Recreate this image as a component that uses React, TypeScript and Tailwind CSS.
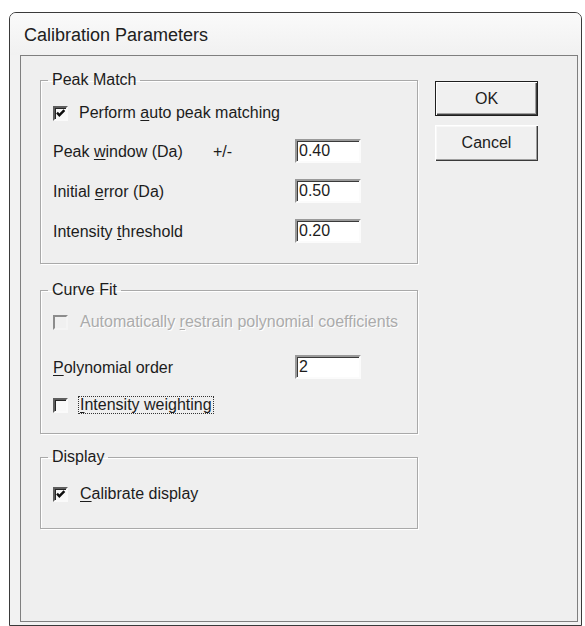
import type { ReactNode } from 'react';

const ui = "font-['Liberation_Sans',Arial,sans-serif]";

function Check({ checked = false, disabled = false }: { checked?: boolean; disabled?: boolean }) {
  return (
    <span
      className={`relative w-[15px] h-[15px] flex-shrink-0 border-2 ${
        disabled
          ? 'border-t-[#8c8c8c] border-l-[#8c8c8c] border-b-[#f4f4f4] border-r-[#f4f4f4] bg-[#f0f0f0]'
          : 'border-t-[#5e5e5e] border-l-[#5e5e5e] border-b-[#fafafa] border-r-[#fafafa] bg-[#f8f8f8] shadow-[inset_1px_1px_0_#262626]'
      }`}
    >
      {checked && (
        <svg viewBox="0 0 11 11" className="absolute left-0 top-0 w-[11px] h-[11px]">
          <path d="M2 4.6 L4.4 7.2 L9.4 2.2" fill="none" stroke="#0e0e0e" strokeWidth="2.4" />
        </svg>
      )}
    </span>
  );
}

function Field({ value }: { value: string }) {
  return (
    <div className="w-[66px] h-[24px] border-2 border-t-[#9a9a9a] border-l-[#9a9a9a] border-b-[#fbfbfb] border-r-[#fbfbfb] bg-white shadow-[inset_1px_1px_0_#3a3a3a] pl-[2px] leading-[20px] text-[16px] text-[#1c1c1c]">
      {value}
    </div>
  );
}

function Group({ title, height, children }: { title: string; height: string; children: ReactNode }) {
  return (
    <fieldset className={`${height} border border-[#a9a9a9] shadow-[inset_1px_1px_0_#ffffff,1px_1px_0_#ffffff]`}>
      <legend className="ml-[7px] px-[4px] text-[16px] leading-[18px] text-[#1c1c1c]">{title}</legend>
      {children}
    </fieldset>
  );
}

function Row({ label, value, extra }: { label: ReactNode; value: string; extra?: string }) {
  return (
    <div className="flex items-center h-[24px] pl-[12px]">
      <span className="w-[160px] pt-[2px]">{label}</span>
      <span className="w-[82px] pt-[2px]">{extra}</span>
      <Field value={value} />
    </div>
  );
}

const Key = ({ children }: { children: string }) => (
  <u className="underline decoration-1 underline-offset-[2px]">{children}</u>
);

export default function App() {
  return (
    <div className={`${ui} w-[585px] h-[626px] bg-white pt-[12px] pl-[9px] text-[16px] text-[#1c1c1c]`}>
      {/* window frame */}
      <div className="w-[573px] h-[614px] border border-[#3a3a3a] rounded-t-[7px] bg-[#f2f2f2] flex flex-col overflow-hidden">
        <div className="h-[42px] flex-shrink-0 flex items-center pl-[14px] pt-[2px] text-[18px] text-[#202020] bg-gradient-to-b from-[#fafafa] to-[#f1f1f1]">
          Calibration Parameters
        </div>

        <div className="flex-1 flex pl-[10px] pr-[3px] pb-[3px]">
          {/* client area */}
          <div className="flex-1 flex gap-[17px] border border-[#7f7f7f] bg-[#efefef] pl-[19px] pt-[15px]">
            <div className="w-[378px] flex flex-col">
              <Group title="Peak Match" height="h-[193px]">
                <div className="flex items-center gap-[11px] h-[20px] pl-[12px] mt-[14px]">
                  <Check checked />
                  <span>Perform <Key>a</Key>uto peak matching</span>
                </div>
                <div className="flex flex-col gap-[16px] mt-[16px]">
                  <Row label={<>Peak <Key>w</Key>indow (Da)</>} extra="+/-" value="0.40" />
                  <Row label={<>Initial <Key>e</Key>rror (Da)</>} value="0.50" />
                  <Row label={<>Intensity <Key>t</Key>hreshold</>} value="0.20" />
                </div>
              </Group>

              <div className="mt-[17px]">
                <Group title="Curve Fit" height="h-[153px]">
                  <div className="flex items-center gap-[12px] h-[20px] pl-[12px] mt-[13px] overflow-hidden whitespace-nowrap">
                    <Check disabled />
                    <span className="text-[#ababab] [text-shadow:1px_1px_0_#ffffff]">
                      Automatically <Key>r</Key>estrain polynomial coefficients
                    </span>
                  </div>
                  <div className="flex items-center h-[24px] pl-[12px] mt-[23px]">
                    <span className="w-[242px] pt-[2px]"><Key>P</Key>olynomial order</span>
                    <Field value="2" />
                  </div>
                  <div className="flex items-center gap-[10px] h-[20px] pl-[12px] mt-[16px]">
                    <Check />
                    <span className="border border-dotted border-[#333] px-[1px] leading-[16px]">
                      <Key>I</Key>ntensity weighting
                    </span>
                  </div>
                </Group>
              </div>

              <div className="mt-[14px]">
                <Group title="Display" height="h-[81px]">
                  <div className="flex items-center gap-[12px] h-[20px] pl-[12px] mt-[18px]">
                    <Check checked />
                    <span><Key>C</Key>alibrate display</span>
                  </div>
                </Group>
              </div>
            </div>

            {/* buttons */}
            <div className="flex flex-col gap-[9px] pt-[10px]">
              <button className="w-[103px] h-[35px] border border-[#1e1e1e] bg-[#f0f0f0] shadow-[inset_1px_1px_0_#ffffff,inset_-1px_-1px_0_#404040,inset_-2px_-2px_0_#a0a0a0] text-[16px] text-[#1c1c1c]">
                OK
              </button>
              <button className="w-[103px] h-[36px] border-0 bg-[#f0f0f0] shadow-[inset_1px_1px_0_#ffffff,inset_-1px_-1px_0_#3a3a3a,inset_-2px_-2px_0_#a0a0a0,inset_2px_2px_0_#f8f8f8] text-[16px] text-[#1c1c1c]">
                Cancel
              </button>
            </div>
          </div>
        </div>
      </div>
    </div>
  );
}
